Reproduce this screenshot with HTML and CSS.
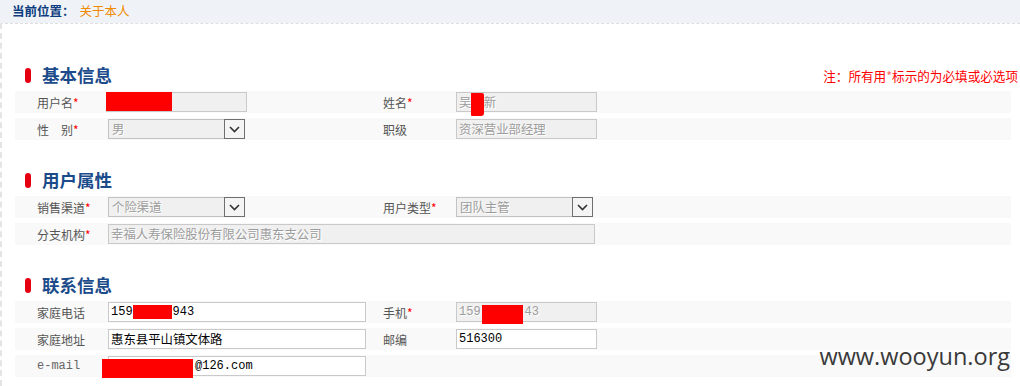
FILE: index.html
```html
<!DOCTYPE html>
<html lang="zh-CN">
<head>
  <meta charset="UTF-8" />
  <title>关于本人</title>
  <link rel="stylesheet" href="styles.css">
</head>
<body>

  <!-- Ruta actual -->
  <div class="crumb">
    <span class="crumb-label">当前位置：</span><span class="crumb-here">关于本人</span>
  </div>

  <div class="content">

    <!-- 基本信息 -->
    <section class="block block-first">
      <div class="block-head">
        <h2 class="block-title">基本信息</h2>
        <span class="note">注：所有用<em>*</em>标示的为必填或必选项</span>
      </div>
      <div class="row">
        <span class="label">用户名<em>*</em></span>
        <span class="field off w-short user-field"><span class="redact redact-user"></span></span>
        <span class="label">姓名<em>*</em></span>
        <span class="field off w-short">吴　新<span class="redact redact-name"></span></span>
      </div>
      <div class="row">
        <span class="label">性　别<em>*</em></span>
        <span class="select w-select"><span class="select-text">男</span><span class="select-arrow"><svg width="19" height="18" viewBox="0 0 19 18"><polyline points="5,7 9.5,11.5 14,7" fill="none" stroke="#333" stroke-width="1.6"/></svg></span></span>
        <span class="label">职级</span>
        <span class="field off w-short">资深营业部经理</span>
      </div>
    </section>

    <!-- 用户属性 -->
    <section class="block">
      <div class="block-head">
        <h2 class="block-title">用户属性</h2>
      </div>
      <div class="row">
        <span class="label">销售渠道<em>*</em></span>
        <span class="select w-select"><span class="select-text">个险渠道</span><span class="select-arrow"><svg width="19" height="18" viewBox="0 0 19 18"><polyline points="5,7 9.5,11.5 14,7" fill="none" stroke="#333" stroke-width="1.6"/></svg></span></span>
        <span class="label">用户类型<em>*</em></span>
        <span class="select w-select"><span class="select-text">团队主管</span><span class="select-arrow"><svg width="19" height="18" viewBox="0 0 19 18"><polyline points="5,7 9.5,11.5 14,7" fill="none" stroke="#333" stroke-width="1.6"/></svg></span></span>
      </div>
      <div class="row">
        <span class="label">分支机构<em>*</em></span>
        <span class="field off w-long span-3">幸福人寿保险股份有限公司惠东支公司</span>
      </div>
    </section>

    <!-- 联系信息 -->
    <section class="block">
      <div class="block-head">
        <h2 class="block-title">联系信息</h2>
      </div>
      <div class="row">
        <span class="label">家庭电话</span>
        <span class="field w-mid mono">159<span class="redact redact-phone"></span>943</span>
        <span class="label">手机<em>*</em></span>
        <span class="field off w-short mono">159<span class="redact redact-mobile"></span>43</span>
      </div>
      <div class="row">
        <span class="label">家庭地址</span>
        <span class="field w-mid">惠东县平山镇文体路</span>
        <span class="label">邮编</span>
        <span class="field w-short mono">516300</span>
      </div>
      <div class="row">
        <span class="label mono">e-mail</span>
        <span class="field w-mid mono"><span class="redact redact-mail"></span>@126.com</span>
      </div>
    </section>

  </div>

  <div class="watermark">www.wooyun.org</div>

</body>
</html>
```

FILE: styles.css
```css
/* ================================
   Base
================================= */
* {
  margin: 0;
  padding: 0;
  box-sizing: border-box;
}

body {
  width: 1020px;
  height: 386px;
  overflow: hidden;
  position: relative;
  background: #fff;
  font-family: "Noto Sans CJK SC", "Noto Sans", sans-serif;
  font-size: 12px;
  color: #555;
}

em {
  font-style: normal;
  color: #f00;
}

.mono {
  font-family: "Liberation Mono", "DejaVu Sans Mono", monospace;
}

/* ================================
   Ruta actual
================================= */
.crumb {
  height: 23px;
  line-height: 21px;
  padding-left: 12px;
  background: #eff3f8;
  font-size: 12.5px;
}

.crumb-label {
  color: #0d3d7e;
  font-weight: bold;
}

.crumb-here {
  margin-left: 5px;
  color: #f28a00;
}

/* ================================
   Contenedor
================================= */
.content {
  height: 363px;
  border-top: 1px dashed #dedede;
  border-left: 2px dashed #e4e4e4;
  padding: 39px 2px 0 13px;
}

.block {
  margin-top: 28px;
}

.block-first {
  margin-top: 0;
}

.block-head {
  display: flex;
  align-items: center;
  justify-content: space-between;
  height: 24px;
  margin-bottom: 4px;
  padding-left: 10px;
}

.block-title {
  display: flex;
  align-items: center;
  gap: 11px;
  font-size: 17.5px;
  line-height: 24px;
  color: #1b4b8a;
  font-weight: bold;
}

.block-title::before {
  content: "";
  width: 6px;
  height: 15px;
  border-radius: 3px;
  background: #e50012;
}

.note {
  color: #f00;
  font-size: 12.6px;
}

.note em {
  color: #f66;
}

/* ================================
   Filas del formulario
================================= */
.row {
  display: grid;
  grid-template-columns: 71px 275px 73px 1fr;
  align-items: center;
  height: 22px;
  margin: 0 7px 5px 0;
  padding-left: 22px;
  background: #f9f9f9;
}

.label {
  color: #555;
  white-space: nowrap;
}

.label.mono {
  color: #666;
}

.field {
  position: relative;
  display: flex;
  align-items: center;
  height: 20px;
  padding-left: 2px;
  border: 1px solid #c9c9c9;
  background: #fff;
  color: #000;
  font-size: 12.4px;
  white-space: nowrap;
}

.field.mono {
  font-size: 12px;
}

.field.off {
  background: #f0f0f0;
  color: #9c9c9c;
  text-shadow: 1px 1px 0 #fff;
}

.w-short { width: 141px; }
.w-select { width: 137px; }
.w-mid { width: 258px; }
.w-long { width: 487px; }

.span-3 {
  grid-column: 2 / 5;
}

.user-field {
  margin-left: -2px;
}

/* ================================
   Select
================================= */
.select {
  position: relative;
  display: flex;
  align-items: center;
  height: 20px;
  padding-left: 3px;
  border: 1px solid #c2c2c2;
  background: #f0f0f0;
  color: #9c9c9c;
  text-shadow: 1px 1px 0 #fff;
  font-size: 12.4px;
}

.select-text {
  flex: 1;
}

.select-arrow {
  display: flex;
  width: 21px;
  height: 20px;
  margin: -1px -1px -1px 0;
  border: 1px solid #6f6f6f;
  background: #f4f4f4;
}

/* ================================
   Datos tapados
================================= */
.redact {
  display: inline-block;
  background: #f00;
}

.redact-user {
  position: absolute;
  left: -1px;
  top: -1px;
  width: 66px;
  height: 19px;
}

.redact-name {
  position: absolute;
  left: 14px;
  top: 0;
  width: 13px;
  height: 23px;
  border-radius: 0 2px 3px 1px;
}

.redact-phone {
  width: 39px;
  height: 14px;
  margin-right: 1px;
}

.redact-mobile {
  width: 41px;
  height: 19px;
  margin: 2px 2px -3px 1px;
}

.redact-mail {
  width: 91px;
  height: 19px;
  margin: 4px 2px 0 -9px;
}

/* ================================
   Marca de agua
================================= */
.watermark {
  position: absolute;
  right: 10px;
  top: 340px;
  font-family: "Open Sans", sans-serif;
  font-size: 23.5px;
  color: #3a3a3a;
}
```
